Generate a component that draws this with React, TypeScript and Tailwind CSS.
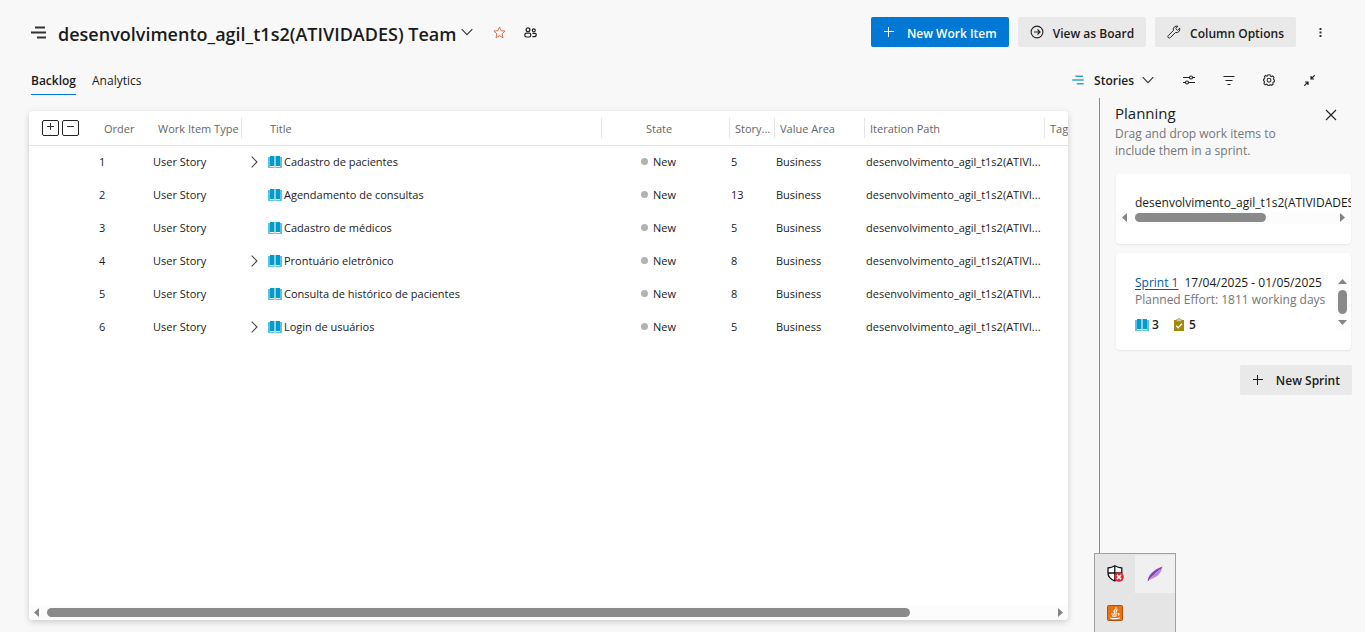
import React from "react";

type WorkItem = {
  order: number;
  title: string;
  points: number;
  expandable: boolean;
};

const items: WorkItem[] = [
  { order: 1, title: "Cadastro de pacientes", points: 5, expandable: true },
  { order: 2, title: "Agendamento de consultas", points: 13, expandable: false },
  { order: 3, title: "Cadastro de médicos", points: 5, expandable: false },
  { order: 4, title: "Prontuário eletrônico", points: 8, expandable: true },
  { order: 5, title: "Consulta de histórico de pacientes", points: 8, expandable: false },
  { order: 6, title: "Login de usuários", points: 5, expandable: true },
];

function Chevron({ className = "" }: { className?: string }) {
  return (
    <svg className={className} width="12" height="12" viewBox="0 0 12 12" fill="none" stroke="#333" strokeWidth="1.1">
      <path d="M0.7 3.2 6 8.6 11.3 3.2" />
    </svg>
  );
}

function Plus({ className = "" }: { className?: string }) {
  return (
    <svg className={className} width="12" height="12" viewBox="0 0 12 12" fill="none" stroke="currentColor" strokeWidth="1">
      <path d="M1 5.5h10M5.5 1v10" />
    </svg>
  );
}

function Book() {
  return (
    <svg className="shrink-0" width="14" height="12" viewBox="0 0 14 12">
      <path d="M0 1h2v10h4.500v1H0zM14 1h-2v10H7.500v1H14z" fill="#5cc3e4" />
      <path d="M2 0h4.400v10H2zM7.600 0H12v10H7.600z" fill="#009ccc" />
      <path d="M6.400 0h1.200v12H6.400z" fill="#8cc6dc" />
    </svg>
  );
}

function Clipboard() {
  return (
    <svg className="shrink-0" width="10" height="13" viewBox="0 0 10 13">
      <path d="M0 2h10v11H0z" fill="#a4880a" />
      <path d="M2.5 3.5V1.6h1.3a1.2 1.2 0 0 1 2.4 0h1.3v1.9z" fill="#d9d2b0" stroke="#8f7a20" strokeWidth=".5" />
      <path d="m2.2 7.8 2 2 3.7-4" fill="none" stroke="#fff" strokeWidth="1.3" />
    </svg>
  );
}

function Arrow({ dir }: { dir: "left" | "right" | "up" | "down" }) {
  const paths = {
    left: "M5 0v9L0 4.5z",
    right: "M0 0v9l5-4.5z",
    up: "M0 5h9L4.5 0z",
    down: "M0 0h9L4.5 5z",
  };
  const flat = dir === "up" || dir === "down";
  return (
    <svg className="shrink-0" width={flat ? 9 : 5} height={flat ? 5 : 9} fill="#858585">
      <path d={paths[dir]} />
    </svg>
  );
}

function Lines({ stroke, className = "" }: { stroke: string; className?: string }) {
  return (
    <svg className={className} viewBox="0 0 15 13" fill="none" stroke={stroke} strokeWidth="2">
      <path d="M4 1.500h10M0 6.500h15M6 11.500h9" />
    </svg>
  );
}

function IconButton({ label, children }: { label: string; children: React.ReactNode }) {
  return (
    <button aria-label={label} className="flex size-5 items-center justify-center">
      {children}
    </button>
  );
}

function Th({ children, pad, line = true }: { children: React.ReactNode; pad: string; line?: boolean }) {
  return (
    <th scope="col" className="p-0 text-left font-normal">
      <div className={`h-5 overflow-hidden pt-px leading-5 ${pad} ${line ? "border-r border-[#e6e6e6]" : ""}`}>
        {children}
      </div>
    </th>
  );
}

function Header() {
  return (
    <header className="flex items-center pt-[17px] pr-[38px] pl-[31px]">
      <Lines stroke="#333" className="h-[13px] w-[15px] shrink-0" />
      <h1 className="ml-3 pt-1 text-[18px] leading-6 font-semibold whitespace-nowrap">
        desenvolvimento_agil_t1s2(ATIVIDADES) Team
      </h1>
      <button aria-label="Select team" className="ml-[5px]">
        <Chevron />
      </button>
      <button aria-label="Add to favorites" className="ml-5">
        <svg width="13" height="13" viewBox="0 0 13 13" fill="none" stroke="#d8744a" strokeWidth="1">
          <path d="m6.500 1 1.600 3.700 4 .4-3 2.700.900 4-3.500-2.100L3 11.800l.900-4-3-2.700 4-.4z" />
        </svg>
      </button>
      <button aria-label="Show team profile" className="ml-[18px]">
        <svg width="13" height="11" viewBox="0 0 13 11" fill="none" stroke="#222" strokeWidth="1.200">
          <circle cx="4" cy="2.700" r="1.900" />
          <circle cx="9.800" cy="3.300" r="1.500" />
          <rect x=".8" y="6.200" width="6" height="3.800" rx="1.700" />
          <path d="M8.400 6.400h2.800q1 0 1 1v.6q0 1.700-2.200 1.700H8.400" />
        </svg>
      </button>
      <div className="ml-auto flex items-center gap-[9px] text-[12px] font-semibold whitespace-nowrap">
        <button className="flex h-[30px] items-center gap-3 rounded-xs bg-[#0078d4] px-3 text-white">
          <Plus />
          <span className="pt-[3px]">New Work Item</span>
        </button>
        <button className="flex h-[30px] items-center gap-[9px] rounded-xs bg-[#e9e9e9] px-3">
          <svg width="14" height="14" viewBox="0 0 14 14" fill="none" stroke="#222" strokeWidth="1.100">
            <circle cx="7" cy="7" r="5.900" />
            <path d="M4 7h6M7.500 4.500 10 7 7.500 9.500" />
          </svg>
          <span className="pt-[3px]">View as Board</span>
        </button>
        <button className="flex h-[30px] items-center gap-[9px] rounded-xs bg-[#e9e9e9] px-3">
          <svg width="14" height="14" viewBox="0 0 14 14" fill="none" stroke="#222" strokeWidth="1" strokeLinejoin="round">
            <path d="M12.700 3.200 10.500 5.300 8.700 3.500l2.200-2.200A3.400 3.400 0 0 0 6.400 5.500L1.300 10.600a1.300 1.300 0 0 0 2 2L8.500 7.500a3.400 3.400 0 0 0 4.200-4.300z" />
          </svg>
          <span className="pt-[3px]">Column Options</span>
        </button>
        <button aria-label="More actions" className="ml-2 flex w-3.5 justify-center">
          <svg width="3" height="11" viewBox="0 0 3 11" fill="#333">
            <path d="M.5 1h2v2h-2zM.5 4.500h2v2h-2zM.5 8h2v2h-2z" />
          </svg>
        </button>
      </div>
    </header>
  );
}

function Tabs() {
  return (
    <div className="flex items-start justify-between pt-6 pr-[46px] pb-[3px] pl-[31px] text-[12px]">
      <nav className="flex gap-4">
        <a href="#backlog" className="border-b border-[#0078d4] pb-[3px] leading-5 font-semibold">
          Backlog
        </a>
        <a href="#analytics" className="leading-5">
          Analytics
        </a>
      </nav>
      <div className="flex h-[18px] items-center gap-[21px]">
        <button className="flex items-center font-semibold">
          <Lines stroke="#35a3cc" className="mr-2.5 h-[10px] w-[12px]" />
          <span className="pt-0.5">Stories</span>
          <Chevron className="ml-2" />
        </button>
        <div className="flex items-center gap-5 pl-1">
          <IconButton label="View options">
            <svg width="12" height="10" viewBox="0 0 12 10" fill="none" stroke="#222" strokeWidth="1.100">
              <path d="M0 2.500h6.500M9.500 2.500H12M0 7.500h2.500M5.500 7.500H12" />
              <circle cx="8" cy="2.500" r="1.500" />
              <circle cx="4" cy="7.500" r="1.500" />
            </svg>
          </IconButton>
          <IconButton label="Filter">
            <svg width="12" height="10" viewBox="0 0 12 10" fill="none" stroke="#222" strokeWidth="1">
              <path d="M0.500 1.500h11M2.500 5.500h7M4.500 9.500h3" />
            </svg>
          </IconButton>
          <IconButton label="Settings">
            <svg width="12" height="12" viewBox="0 0 12 12" fill="none" stroke="#333" strokeWidth="1.100">
              <path d="M5 .7h2l.4 1.400 1 .5 1.300-.6 1.300 1.400-.6 1.300.3 1 .8.300-.1 1.600-1.200.600-.4 1 .3 1-1.400 1.100-1.200-.6-1 .3L5.900 12h-.800l-.6-1.400-1-.4-1.300.6L.9 9.400l.6-1.200-.3-1L.5 6.700V5.200l1-.4.4-1-.5-1.200L2.500 1.400l1.300.7.8-.2z" />
              <circle cx="6" cy="6.200" r="1.900" />
            </svg>
          </IconButton>
          <IconButton label="Exit full screen">
            <svg width="11" height="11" viewBox="0 0 11 11" fill="none" stroke="#222" strokeWidth="1.200">
              <path d="M10.700.3 7 4M7 1v3h3M.3 10.700 4 7M1 7h3v3" />
            </svg>
          </IconButton>
        </div>
      </div>
    </div>
  );
}

function Backlog() {
  return (
    <main className="mt-[13px] mr-[31px] mb-3 ml-[29px] flex min-w-0 flex-1 flex-col overflow-hidden rounded-[4px] bg-white shadow-[0_2px_6px_rgba(0,0,0,0.18)]">
      <div className="min-h-0 flex-1 overflow-hidden">
        <table className="w-[1096px] table-fixed border-collapse text-[11px] whitespace-nowrap">
          <colgroup>
            <col className="w-[64px]" />
            <col className="w-[54px]" />
            <col className="w-[95px]" />
            <col className="w-[360px]" />
            <col className="w-[128px]" />
            <col className="w-[45px]" />
            <col className="w-[90px]" />
            <col className="w-[180px]" />
            <col className="w-[80px]" />
          </colgroup>
          <thead>
            <tr className="h-[34px] border-b border-[#e6e6e6] text-[#666]">
              <th className="p-0 pl-[13px]">
                <div className="flex gap-[3px] text-[#333]">
                  <button aria-label="Expand all" className="flex h-4 w-[17px] justify-center rounded-xs border border-[#222] pt-px">
                    <svg width="9" height="9" viewBox="0 0 9 9" stroke="currentColor">
                      <path d="M1 4.500h7M4.500 1v7" />
                    </svg>
                  </button>
                  <button aria-label="Collapse all" className="flex h-4 w-[17px] justify-center rounded-xs border border-[#222] pt-px">
                    <svg width="9" height="9" viewBox="0 0 9 9" stroke="currentColor">
                      <path d="M1 4.500h7" />
                    </svg>
                  </button>
                </div>
              </th>
              <Th pad="pl-[11px]" line={false}>Order</Th>
              <Th pad="pl-[11px]">Work Item Type</Th>
              <Th pad="pl-7">Title</Th>
              <Th pad="pl-11">State</Th>
              <Th pad="pl-[5px]">Story...</Th>
              <Th pad="pl-[5px]">Value Area</Th>
              <Th pad="pl-[5px]">Iteration Path</Th>
              <Th pad="pl-[5px]" line={false}>Tag</Th>
            </tr>
          </thead>
          <tbody>
            {items.map((item) => (
              <tr key={item.order} className="h-[33px]">
                <td className="p-0 pt-px" />
                <td className="p-0 pt-px pl-1.5">{item.order}</td>
                <td className="p-0 pt-px pl-1.5">User Story</td>
                <td className="p-0 pl-[9px]">
                  <div className="flex items-center">
                    {item.expandable ? (
                      <button aria-label={`Expand ${item.title}`} className="w-[17px] shrink-0">
                        <svg width="7" height="12" viewBox="0 0 7 12" fill="none" stroke="#444" strokeWidth="1.100">
                          <path d="m.7.700 5.300 5.300-5.300 5.300" />
                        </svg>
                      </button>
                    ) : (
                      <span className="w-[17px] shrink-0" />
                    )}
                    <Book />
                    <span className="ml-0.5 pt-px">{item.title}</span>
                  </div>
                </td>
                <td className="p-0 pl-[39px]">
                  <div className="flex items-center gap-[5px]">
                    <span className="size-[7px] rounded-full bg-[#b2b2b2]" />
                    <span className="pt-px">New</span>
                  </div>
                </td>
                <td className="p-0 pt-px pl-px">{item.points}</td>
                <td className="p-0 pt-px pl-px">Business</td>
                <td className="p-0 pt-px pl-px">desenvolvimento_agil_t1s2(ATIVI...</td>
                <td className="p-0" />
              </tr>
            ))}
          </tbody>
        </table>
      </div>
      <div className="flex h-[15px] items-center bg-[#fcfcfc] px-[5px]">
        <Arrow dir="left" />
        <div className="mx-2 flex-1">
          <div className="h-[9px] w-[86%] rounded-full bg-[#8a8a8a]" />
        </div>
        <Arrow dir="right" />
      </div>
    </main>
  );
}

function Planning() {
  return (
    <aside className="w-[266px] shrink-0 border-l border-[#8a8a8a] pr-[13px] pl-[15px]">
      <div className="flex items-start justify-between pt-[3px]">
        <h2 className="text-[15px] leading-6">Planning</h2>
        <button aria-label="Close planning pane" className="mt-2 mr-[15px]">
          <svg width="12" height="12" viewBox="0 0 12 12" stroke="#222" strokeWidth="1.100">
            <path d="m1 1 10 10M11 1 1 11" />
          </svg>
        </button>
      </div>
      <p className="w-[176px] text-[12px] leading-[17px] text-[#767676]">
        Drag and drop work items to include them in a sprint.
      </p>

      <section className="mt-[15px] mr-px ml-px flex h-[70px] flex-col overflow-hidden rounded-[4px] bg-white pt-5 shadow-[0_1px_2px_rgba(0,0,0,0.08)]">
        <div className="overflow-hidden pl-[19px] text-[12px] leading-[17px] whitespace-nowrap">
          desenvolvimento_agil_t1s2(ATIVIDADES) Team
        </div>
        <div className="flex h-[13px] items-center bg-[#fcfcfc] px-1.5">
          <Arrow dir="left" />
          <div className="mx-2 flex-1">
            <div className="h-[9px] w-2/3 rounded-full bg-[#8a8a8a]" />
          </div>
          <Arrow dir="right" />
        </div>
      </section>

      <section className="mt-[9px] mr-px ml-px flex h-[97px] justify-between rounded-[4px] bg-white pt-5 pr-0.5 pl-[19px] shadow-[0_1px_2px_rgba(0,0,0,0.08)]">
        <div className="pt-px text-[12px] leading-[17px] whitespace-nowrap">
          <div className="flex gap-1.5">
            <a href="#sprint-1" className="text-[#005a9e] underline underline-offset-2">
              Sprint 1
            </a>
            <span>17/04/2025 - 01/05/2025</span>
          </div>
          <div className="text-[#767676]">Planned Effort: 1811 working days</div>
          <div className="mt-2 flex items-center gap-[3px] font-semibold">
            <Book />
            <span className="mr-3">3</span>
            <Clipboard />
            <span className="ml-0.5">5</span>
          </div>
        </div>
        <div className="flex h-[58px] w-[13px] flex-col items-center bg-[#fcfcfc] py-1.5">
          <Arrow dir="up" />
          <div className="my-1.5 w-[9px] flex-1 rounded-full bg-[#8a8a8a]" />
          <Arrow dir="down" />
        </div>
      </section>

      <button className="mt-[15px] ml-auto flex h-[30px] items-center gap-3 rounded-xs bg-[#e9e9e9] px-3 text-[12px] font-semibold whitespace-nowrap">
        <Plus />
        <span className="pt-px">New Sprint</span>
      </button>
    </aside>
  );
}

function TrayPopup() {
  return (
    <div className="absolute right-[189px] bottom-0 grid h-[79px] grid-cols-[40px_40px] grid-rows-[39px_39px] border border-b-0 border-[#a0a0a0] bg-[#e5e5e5]">
      <div className="flex items-center justify-center">
        <svg width="17" height="17" viewBox="0 0 17 17">
          <path d="M1 3q4-.3 6.800-2.200Q11 2.700 14.800 3v5q0 5-7 8Q1 13 1 8z" fill="#fff" stroke="#111" strokeWidth="1.300" />
          <path d="M7.800 1v15M1 8h14" stroke="#111" strokeWidth="1.300" />
          <circle cx="12" cy="12" r="4.800" fill="#df2630" />
          <path d="m9.900 9.900 4.200 4.200M14.100 9.900l-4.200 4.200" stroke="#fff" strokeWidth="1.500" />
        </svg>
      </div>
      <div className="mt-px flex items-center justify-center bg-[#f0f0f0]">
        <svg width="16" height="16" viewBox="0 0 16 16">
          <path d="M.5 15.500Q1 9 6 5.500 10 2 15.500.500 14.500 7 9.500 10.500 5 12.500.5 15.500z" fill="#b88cdb" />
          <path d="M.5 15.500Q2 9 7 5.500 11 2.500 15.500.500 12 6 7 9.200 3 12 .5 15.500z" fill="#7e38b0" />
          <path d="M2 14Q6 9 13 3.500" stroke="#d9bdee" strokeWidth=".8" fill="none" />
        </svg>
      </div>
      <div className="flex items-center justify-center">
        <svg width="16" height="16" viewBox="0 0 16 16" fill="none">
          <rect x=".5" y=".5" width="15" height="15" rx="1" fill="#ea7112" stroke="#b94d0b" />
          <path d="M8.800 2q1 1.500-.9 2.700-1.800 1.300.2 3.300M10.500 4.500Q8.500 5.500 9.500 7.500M4.500 8.500Q4 9.500 10.500 8.800M11 8.500q2 0 .2 1.800M5 10.700q2 .8 5 0M3.500 12.500q-.5 1.300 5 1.100 4 0 4.200-1.100" stroke="#fff" strokeWidth="1.100" />
        </svg>
      </div>
    </div>
  );
}

export default function App() {
  return (
    <div className="relative flex h-screen flex-col overflow-hidden bg-[#f8f8f8] font-['Open_Sans','Noto_Sans',sans-serif] text-[#1b1b1b]">
      <Header />
      <Tabs />
      <div className="flex min-h-0 flex-1">
        <Backlog />
        <Planning />
      </div>
      <TrayPopup />
    </div>
  );
}
